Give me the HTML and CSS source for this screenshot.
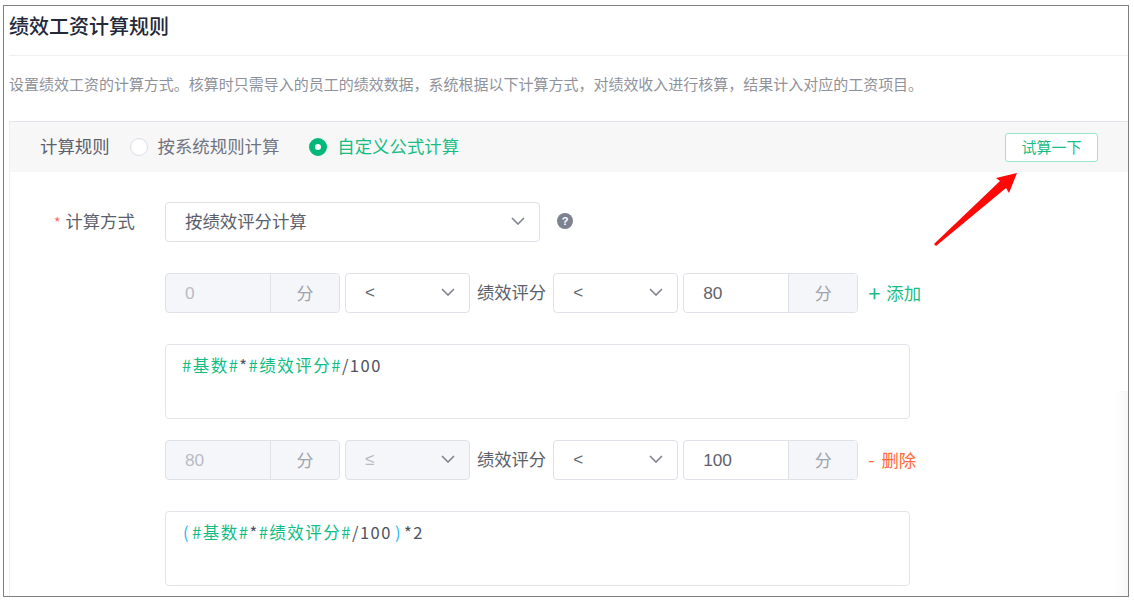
FILE: index.html
```html
<!DOCTYPE html>
<html lang="zh">
<head>
<meta charset="utf-8">
<title>绩效工资计算规则</title>
<link rel="stylesheet" href="styles.css">
</head>
<body>
<div class="frame">
  <h1 class="title">绩效工资计算规则</h1>
  <p class="desc">设置绩效工资的计算方式。核算时只需导入的员工的绩效数据，系统根据以下计算方式，对绩效收入进行核算，结果计入对应的工资项目。</p>
  <div class="panel">
    <div class="rule-bar">
      <span class="rule-label">计算规则</span>
      <span class="radio"></span><span class="radio-text">按系统规则计算</span>
      <span class="radio checked"></span><span class="radio-text on">自定义公式计算</span>
      <button class="try-btn">试算一下</button>
    </div>
    <div class="form">
      <div class="method-row">
        <span class="method-label"><i class="req">*</i>计算方式</span>
        <div class="select method-select"><span class="sel-text">按绩效评分计算</span>
          <svg class="chev" viewBox="0 0 14 8"><path d="M1 1l6 6 6-6"/></svg>
        </div>
        <svg class="help" viewBox="0 0 16 16"><circle cx="8" cy="8" r="8"/><text x="8" y="12" text-anchor="middle">?</text></svg>
      </div>

      <div class="range-row first">
        <div class="group disabled"><span class="num">0</span><span class="addon">分</span></div>
        <div class="select op"><span>&lt;</span><svg class="chev" viewBox="0 0 14 8"><path d="M1 1l6 6 6-6"/></svg></div>
        <span class="score">绩效评分</span>
        <div class="select op"><span>&lt;</span><svg class="chev" viewBox="0 0 14 8"><path d="M1 1l6 6 6-6"/></svg></div>
        <div class="group"><span class="num">80</span><span class="addon">分</span></div>
        <span class="link add"><b>+</b>添加</span>
      </div>
      <div class="formula"><em class="var">#基数#</em>*<em class="var">#绩效评分#</em>/100</div>

      <div class="range-row">
        <div class="group disabled"><span class="num">80</span><span class="addon">分</span></div>
        <div class="select op disabled"><span>≤</span><svg class="chev" viewBox="0 0 14 8"><path d="M1 1l6 6 6-6"/></svg></div>
        <span class="score">绩效评分</span>
        <div class="select op"><span>&lt;</span><svg class="chev" viewBox="0 0 14 8"><path d="M1 1l6 6 6-6"/></svg></div>
        <div class="group"><span class="num">100</span><span class="addon">分</span></div>
        <span class="link del"><b>-</b>删除</span>
      </div>
      <div class="formula"><em class="paren open">(</em><em class="var">#基数#</em>*<em class="var">#绩效评分#</em>/100<em class="paren close">)</em>*2</div>
    </div>
  </div>
  <div class="edge-shadow"></div>
  <svg class="arrow" viewBox="0 0 90 80" width="90" height="80"><path d="M85 0L77 20 74 15 4 73 2 71 68 8 64 5z"/></svg>
</div>
</body>
</html>
```

FILE: styles.css
```css
* { box-sizing: border-box; }
html, body { margin: 0; background: #fff; }
body { padding: 5px 5px 6px 3px; font-family: "Noto Sans CJK SC", "Noto Sans", sans-serif; color: #4e5260; }
.frame {
  position: relative;
  height: 592px;
  border: 1px solid #808080;
  overflow: hidden;
  padding-left: 5px;
  background: #fff;
}
.title {
  margin: 0;
  height: 50px;
  border-bottom: 1px solid #eeeff1;
  font-size: 20px;
  font-weight: 500;
  line-height: 40px;
  color: #23283a;
}
.desc {
  margin: 0;
  height: 65px;
  font-size: 15px;
  line-height: 56px;
  color: #8f929b;
  letter-spacing: -0.015px;
  white-space: nowrap;
}
.panel { border-left: 1px solid #eeeff2; height: 480px; }
.rule-bar {
  display: flex;
  align-items: center;
  height: 51px;
  padding-left: 30px;
  padding-right: 30px;
  background: #f7f7f8;
  border-top: 1px solid #e3e4ea;
  font-size: 17.4px;
}
.rule-label { margin-right: 20px; margin-bottom: 4px; color: #5b5f6c; }
.radio {
  width: 18px;
  height: 18px;
  border: 1px solid #dcdee6;
  border-radius: 50%;
  background: #fff;
  margin-right: 10px;
}
.radio.checked {
  border: 6px solid #00b877;
  margin-right: 10px;
}
.radio-text { margin-right: 30px; margin-bottom: 4px; color: #70737e; }
.radio-text.on { color: #15bd83; margin-right: 0; }
.try-btn {
  margin-left: auto;
  width: 93px;
  height: 29px;
  padding: 0 0 2px;
  border: 1px solid #9de3c8;
  border-radius: 3px;
  background: #fff;
  color: #1bbd85;
  font: 15px "Noto Sans CJK SC", sans-serif;
}
.form { padding: 30px 0 0 155px; }
.method-row { display: flex; align-items: center; height: 40px; position: relative; }
.method-label {
  position: absolute;
  left: -111px;
  top: 6px;
  line-height: 26px;
  color: #5b5f6c;
  font-size: 17.3px;
  white-space: nowrap;
}
.req { color: #f66; font-style: normal; font-size: 14px; margin-right: 5px; }
.select {
  display: flex;
  align-items: center;
  justify-content: space-between;
  height: 40px;
  border: 1px solid #dfe1e8;
  border-radius: 4px;
  background: #fff;
  font-size: 17px;
  color: #5b5f6c;
}
.sel-text { font-size: 17.4px; margin-bottom: 3px; }
.method-select { width: 375px; padding: 0 14px 0 19px; }
.chev { width: 14px; height: 8px; margin-bottom: 2px; fill: none; stroke: #7f838f; stroke-width: 1.6; }
.help { width: 16px; height: 16px; margin-left: 17px; margin-bottom: 2px; fill: #7e818e; }
.help text { fill: #fff; font: bold 11px "Liberation Sans", sans-serif; }
.range-row { display: flex; align-items: center; height: 40px; margin-top: 21px; }
.range-row.first { margin-top: 31px; }
.group {
  display: flex;
  width: 175px;
  height: 40px;
  border: 1px solid #dfe1e8;
  border-radius: 4px;
  overflow: hidden;
  background: #fff;
  font-size: 17.3px;
}
.num {
  width: 104px;
  padding-left: 19px;
  line-height: 38px;
  font-family: "Liberation Sans", sans-serif;
  color: #5f626c;
}
.addon {
  flex: 1;
  text-align: center;
  line-height: 38px;
  font-size: 17px;
  background: #f5f6fa;
  border-left: 1px solid #dfe1e8;
  color: #a0a3ab;
}
.group.disabled { background: #f5f6fa; }
.group.disabled .num { color: #b9bbc3; }
.op {
  width: 125px;
  padding: 0 14px 0 19px;
  margin-left: 5px;
}
.op span { font-family: "Liberation Sans", sans-serif; }
.op.disabled { background: #f5f6fa; }
.op.disabled span { color: #b9bbc3; }
.op + .group { margin-left: 5px; }
.score { margin: 0 7px 3px; font-size: 17.3px; color: #5b5f6c; white-space: nowrap; }
.score + .op { margin-left: 0; }
.link { margin-left: 10px; margin-bottom: 2px; font-size: 17.4px; }
.link b { font-weight: 400; margin-right: 6px; }
.add { color: #1bbd85; }
.add b { font-size: 22px; line-height: 1; vertical-align: -2px; }
.del { color: #ff6a3c; }
.del b { margin-right: 7px; font-size: 18px; }
.formula {
  width: 745px;
  height: 75px;
  margin-top: 31px;
  padding: 8px 16px 0;
  border: 1px solid #e3e4ea;
  border-radius: 4px;
  font-size: 16.5px;
  line-height: 24px;
  letter-spacing: 1.5px;
  color: #4e5260;
}
.formula em { font-style: normal; }
.var { color: #10bd83; }
.paren { color: #29b6f6; }
.paren.open { margin: 0 2px 0 1px; }
.paren.close { margin: 0 2px 0 3px; }
.edge-shadow {
  position: absolute;
  right: 0;
  top: 385px;
  bottom: 0;
  width: 14px;
  background: linear-gradient(to right, rgba(240,240,240,0), rgba(240,240,240,.55));
}
.arrow {
  position: absolute;
  left: 928px;
  top: 167px;
  fill: #ff0808;
}
```
